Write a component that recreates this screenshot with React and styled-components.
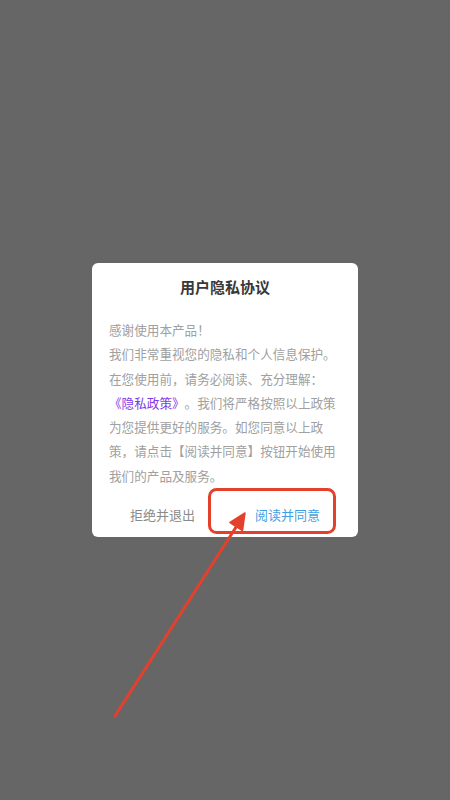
import React from 'react'
import styled, { createGlobalStyle } from 'styled-components'

const GlobalStyle = createGlobalStyle`
    html, body {
        margin: 0;
        padding: 0;
        background-color: #666666;
    }
    body {
        font-family: "Noto Sans CJK SC", "Noto Sans", sans-serif;
        text-spacing-trim: space-all;
    }
`
const Screen = styled.div`
    position: relative;
    width: 100%;
    min-height: 100vh;
    display: flex;
    align-items: center;
    justify-content: center;
`
const Dialog = styled.div`
    width: 266px;
    background-color: #fff;
    border-radius: 6px;
    box-sizing: border-box;
    padding-top: 14px;
`
const Title = styled.h3`
    margin: 0;
    font-size: 15px;
    line-height: 20px;
    font-weight: bold;
    color: #383838;
    text-align: center;
`
const Body = styled.p`
    margin: 21px 0 0;
    padding: 0 17px;
    font-size: 12.6px;
    line-height: 24.3px;
    color: #a0a0a0;
    word-break: break-all;
    text-spacing-trim: space-all;
`
const Link = styled.span`
    color: #7f3ae8;
`
const Footer = styled.div`
    display: flex;
    justify-content: center;
    align-items: center;
    gap: 60px;
    height: 44px;
    margin-top: 5px;
`
const Button = styled.button`
    border: none;
    background: none;
    padding: 0;
    font-family: inherit;
    font-size: 13px;
    line-height: 20px;
    color: ${props => props.primary ? '#3f9fe6' : '#8a8a8a'};
    cursor: pointer;
`
const Annotation = styled.svg`
    position: absolute;
    left: 0;
    top: 0;
    width: 450px;
    height: 800px;
    pointer-events: none;
`

const App = () => {
    return (
        <>
            <GlobalStyle />
            <Screen>
                <Dialog>
                    <Title>用户隐私协议</Title>
                    <Body>
                        感谢使用本产品！<br />
                        我们非常重视您的隐私和个人信息保护。在您使用前，请务必阅读、充分理解：
                        <Link>《隐私政策》</Link>。我们将严格按照以上政策为您提供更好的服务。如您同意以上政策，请点击【阅读并同意】按钮开始使用我们的产品及服务。
                    </Body>
                    <Footer>
                        <Button>拒绝并退出</Button>
                        <Button primary>阅读并同意</Button>
                    </Footer>
                </Dialog>
                <Annotation viewBox="0 0 450 800">
                    <rect x="209.5" y="489.5" width="125" height="43" rx="7" fill="none" stroke="#e4402c" strokeWidth="3" />
                    <line x1="115" y1="716" x2="238" y2="524" stroke="#e4402c" strokeWidth="3" strokeLinecap="round" />
                    <polygon points="245,513 242.5,530.5 230,522.5" fill="#e4402c" stroke="#e4402c" strokeWidth="1.5" strokeLinejoin="round" />
                </Annotation>
            </Screen>
        </>
    )
}
export default App
